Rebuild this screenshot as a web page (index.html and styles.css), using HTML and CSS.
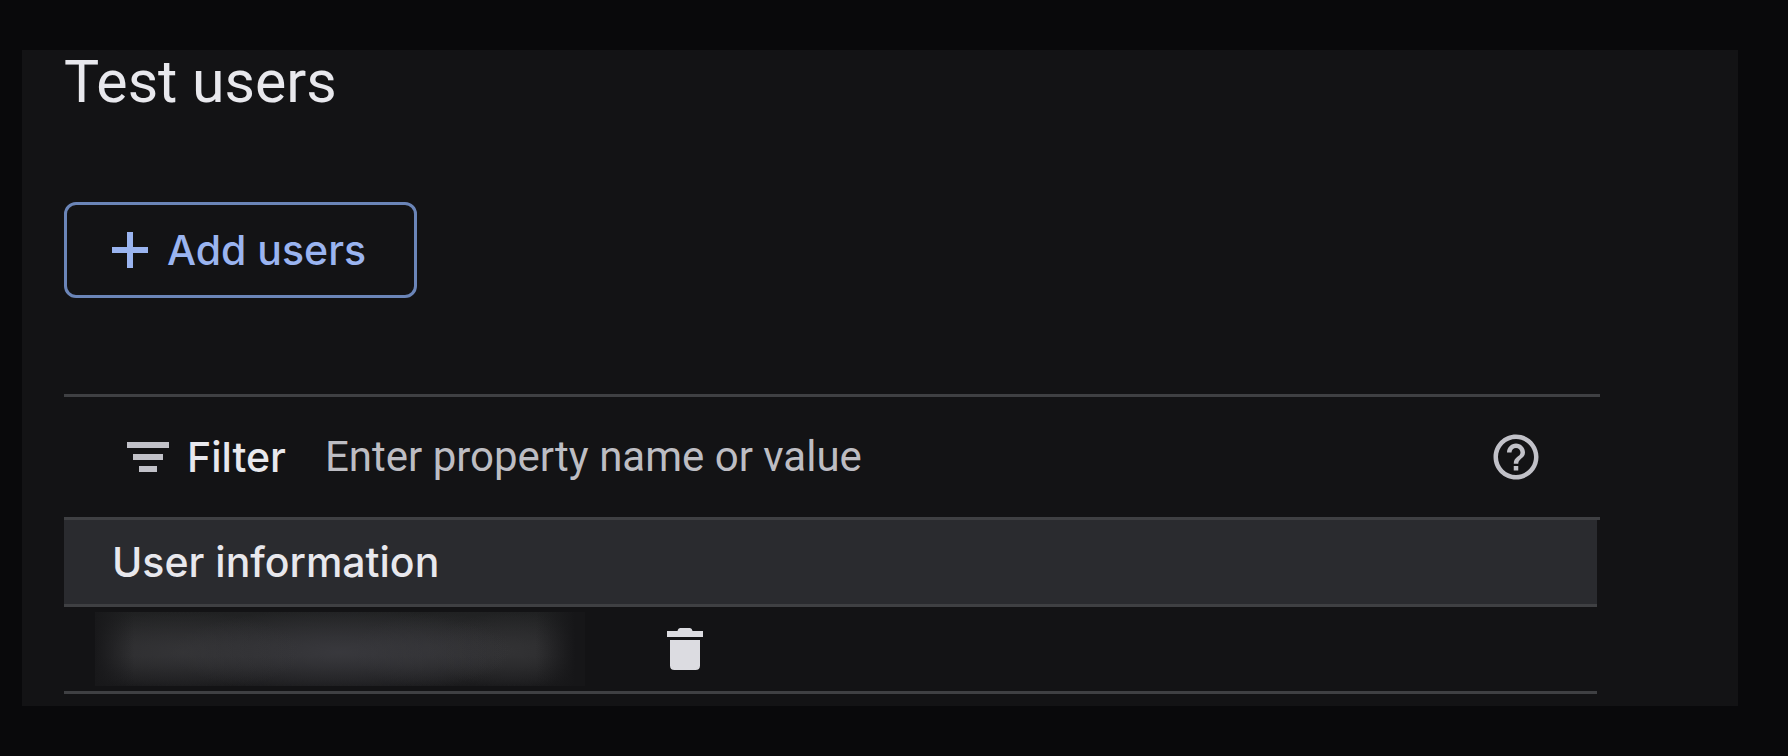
FILE: index.html
```html
<!DOCTYPE html>
<html lang="en">
<head>
<meta charset="utf-8">
<meta name="viewport" content="width=device-width, initial-scale=1">
<title>Test users</title>
<link rel="stylesheet" href="styles.css">
</head>
<body>
<main class="panel">
  <h1 class="title">Test users</h1>
  <button class="add-button" type="button">
    <svg class="icon" viewBox="0 0 18 18" aria-hidden="true"><path d="M8 3h2v5h5v2h-5v5H8v-5H3V8h5z"/></svg>
    <span>Add users</span>
  </button>
  <section class="users">
    <div class="filter-bar">
      <svg class="icon" viewBox="0 0 18 18" aria-hidden="true"><path d="M2 4h14v2H2zM4 8h10v2H4zM6 12h6v2H6z"/></svg>
      <label class="filter-label" for="filter">Filter</label>
      <input class="filter-input" id="filter" type="text" placeholder="Enter property name or value">
      <button class="icon-button help" type="button" aria-label="Help">
        <svg class="icon" viewBox="0 0 24 24" aria-hidden="true"><path d="M11 18h2v-2h-2v2zm1-16C6.480 2 2 6.480 2 12s4.480 10 10 10 10-4.480 10-10S17.520 2 12 2zm0 18c-4.410 0-8-3.590-8-8s3.590-8 8-8 8 3.590 8 8-3.590 8-8 8zm0-14c-2.210 0-4 1.790-4 4h2c0-1.100.9-2 2-2s2 .9 2 2c0 2-3 1.750-3 5h2c0-2.250 3-2.500 3-5 0-2.210-1.790-4-4-4z"/></svg>
      </button>
    </div>
    <table class="user-table">
      <thead>
        <tr><th class="user-head" colspan="2" scope="col">User information</th></tr>
      </thead>
      <tbody>
        <tr>
          <td class="user-cell"><div class="redacted" role="img" aria-label="Hidden user"></div></td>
          <td class="action-cell">
            <button class="icon-button delete" type="button" aria-label="Delete user">
              <svg class="icon" viewBox="0 0 18 18" aria-hidden="true"><path d="M3 3h3.500Q6.700 2 7.500 2h3q.8 0 1 1H15v2H3zM4 6h10v8.500q0 1.500-1.500 1.500h-7Q4 16 4 14.500z"/></svg>
            </button>
          </td>
        </tr>
      </tbody>
    </table>
  </section>
</main>
</body>
</html>
```
FILE: styles.css
```css
* { box-sizing: border-box; }
body {
  margin: 0;
  padding: 50px 50px 50px 22px;
  background: #09090b;
  color: #e8e8ed;
  font-family: Inter, Roboto, sans-serif;
  font-size: 41px;
  line-height: 48px;
}
.panel {
  padding: 0 138px 12px 42px;
  background: #131315;
}
.title {
  margin: 0 0 88px;
  font-family: Roboto, sans-serif;
  font-size: 59px;
  font-weight: 400;
  line-height: 64px;
}
button {
  margin: 0;
  padding: 0;
  border: 0;
  background: none;
  color: inherit;
  font: inherit;
  cursor: pointer;
}
.icon {
  display: block;
  flex: none;
  width: 54px;
  height: 54px;
  fill: currentColor;
}
.icon-button { display: block; }
.add-button {
  display: flex;
  align-items: center;
  gap: 10px;
  height: 96px;
  padding: 0 48px 0 36px;
  border: 3px solid #6b85b8;
  border-radius: 12px;
  color: #9ab4f0;
  font-weight: 500;
}
.users { margin-top: 96px; }
.filter-bar {
  display: flex;
  align-items: center;
  height: 126px;
  padding: 0 57px;
  border-top: 3px solid #3f4043;
  border-bottom: 3px solid #3f4043;
  color: #c1c1c8;
}
.filter-label {
  margin: 0 39px 0 12px;
  color: #e8e8ed;
  font-weight: 500;
}
.filter-input {
  flex: 1;
  min-width: 0;
  padding: 0;
  border: 0;
  outline: 0;
  background: none;
  color: inherit;
  font: 400 42px/48px Roboto, "Noto Sans", sans-serif;
}
.filter-input::placeholder { color: #bdbdc3; opacity: 1; }
.user-table {
  width: calc(100% - 3px);
  border-spacing: 0;
  table-layout: auto;
}
.user-head,
.user-cell,
.action-cell {
  height: 87px;
  padding: 0;
  border-bottom: 3px solid #3f4043;
}
.user-head {
  padding-left: 48px;
  background: #2a2b2f;
  font-weight: 500;
  text-align: left;
}
.user-cell {
  width: 594px;
  padding-left: 31px;
}
.redacted {
  width: 490px;
  height: 74px;
  background:
    linear-gradient(90deg, #18181a, transparent 8%, transparent 90%, #161618 98%),
    radial-gradient(ellipse 120px 40px at 18% 54%, #3a3a3d90, transparent),
    radial-gradient(ellipse 170px 44px at 50% 54%, #404046a0, transparent),
    radial-gradient(ellipse 80px 38px at 69% 52%, #36363980, transparent),
    radial-gradient(ellipse 80px 38px at 85% 52%, #363638a0, transparent),
    linear-gradient(#202122, #2b2b2d 45%, #2b2b2d 60%, #1a1a1c);
}
.delete { color: #dcdce1; }
```
